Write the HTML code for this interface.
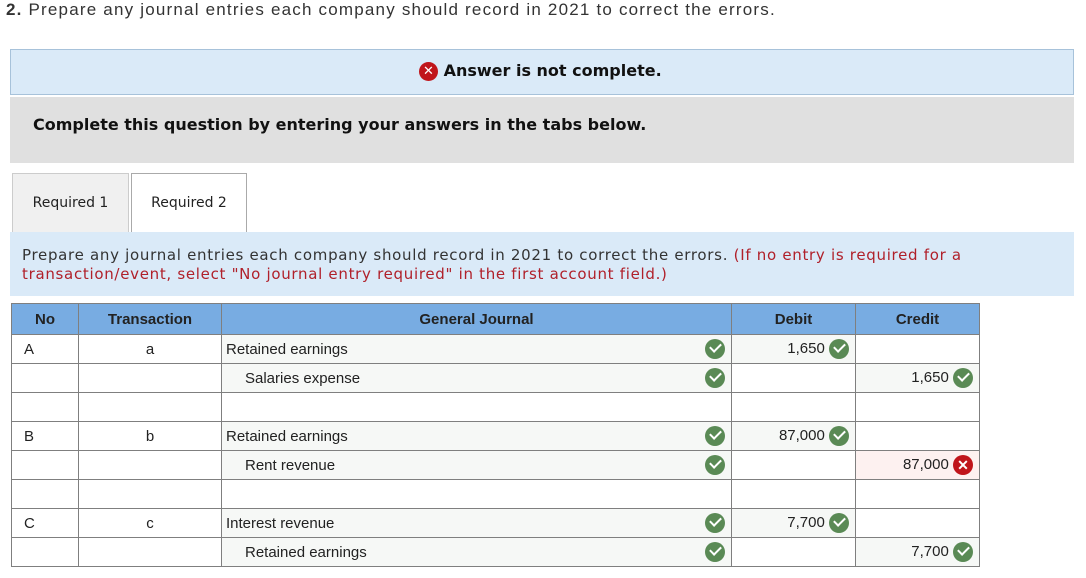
<!DOCTYPE html>
<html><head><style>
body{margin:0;width:1086px;height:578px;background:#fff;position:relative;overflow:hidden;font-family:"Liberation Sans",Arial,sans-serif;}
.a{position:absolute;}
.v{font-family:"DejaVu Sans",Verdana,sans-serif;}
table{position:absolute;left:11px;top:303px;border-collapse:collapse;font-size:15px;color:#222;}
td,th{border:1px solid #7f7f7f;height:28px;padding:0;vertical-align:middle;}
th{background:#78ace2;font-size:15px;height:30px;}
.f{background:#f6f8f6;}
.chk{display:inline-block;width:20px;height:20px;border-radius:50%;background:#5a8a55;vertical-align:middle;position:relative;}
.chk:after{content:"";position:absolute;left:5px;top:4px;width:9px;height:5px;border-left:2.5px solid #fff;border-bottom:2.5px solid #fff;transform:rotate(-45deg);}
.x{display:inline-block;width:20px;height:20px;border-radius:50%;background:#c0151b;color:#fff;font-weight:bold;font-size:14px;line-height:20px;text-align:center;vertical-align:middle;}
.r{text-align:right;padding-right:6px;}
.g{display:flex;align-items:center;justify-content:space-between;padding-right:6px;}
</style></head><body>
<div class="a" style="left:6px;top:0;font-size:17px;letter-spacing:1.2px;color:#333;">
<b>2.</b> Prepare any journal entries each company should record in 2021 to correct the errors.</div>
<div class="a" style="left:10px;top:49px;width:1062px;height:44px;background:#daeaf8;border:1px solid #a7c2da;"></div>
<div class="a v" style="left:419px;top:61px;font-size:16px;font-weight:bold;color:#111;"><span class="x" style="width:19px;height:19px;line-height:19px;font-size:13px;">✕</span> Answer is not complete.</div>
<div class="a" style="left:10px;top:97px;width:1064px;height:66px;background:#e0e0e0;"></div>
<div class="a v" style="left:33px;top:115px;font-size:16px;font-weight:bold;color:#111;">Complete this question by entering your answers in the tabs below.</div>
<div class="a v" style="left:12px;top:173px;width:115px;height:59px;background:#f0f0f0;border:1px solid #ccc;border-bottom:none;font-size:14px;line-height:59px;text-align:center;color:#222;">Required 1</div>
<div class="a v" style="left:131px;top:173px;width:114px;height:60px;background:#fff;border:1px solid #aaa;border-bottom:none;font-size:14px;line-height:59px;text-align:center;color:#222;">Required 2</div>
<div class="a" style="left:10px;top:232px;width:1064px;height:64px;background:#daeaf8;"></div>
<div class="a v" style="left:22px;top:246px;font-size:15px;line-height:19px;letter-spacing:0.7px;color:#333;width:975px;">Prepare any journal entries each company should record in 2021 to correct the errors. <span style="color:#b0202a">(If no entry is required for a transaction/event, select "No journal entry required" in the first account field.)</span></div>
<table>
<tr><th style="width:66px">No</th><th style="width:142px">Transaction</th><th style="width:509px">General Journal</th><th style="width:123px">Debit</th><th style="width:123px">Credit</th></tr>
<tr><td style="padding-left:12px">A</td><td style="text-align:center">a</td><td class="f"><div class="g" style="padding-left:4px">Retained earnings<span class="chk"></span></div></td><td class="f r">1,650 <span class="chk"></span></td><td></td></tr>
<tr><td></td><td></td><td class="f"><div class="g" style="padding-left:23px">Salaries expense<span class="chk"></span></div></td><td></td><td class="f r">1,650 <span class="chk"></span></td></tr>
<tr><td></td><td></td><td></td><td></td><td></td></tr>
<tr><td style="padding-left:12px">B</td><td style="text-align:center">b</td><td class="f"><div class="g" style="padding-left:4px">Retained earnings<span class="chk"></span></div></td><td class="f r">87,000 <span class="chk"></span></td><td></td></tr>
<tr><td></td><td></td><td class="f"><div class="g" style="padding-left:23px">Rent revenue<span class="chk"></span></div></td><td></td><td class="r" style="background:#fdf1f0">87,000 <span class="x">✕</span></td></tr>
<tr><td></td><td></td><td></td><td></td><td></td></tr>
<tr><td style="padding-left:12px">C</td><td style="text-align:center">c</td><td class="f"><div class="g" style="padding-left:4px">Interest revenue<span class="chk"></span></div></td><td class="f r">7,700 <span class="chk"></span></td><td></td></tr>
<tr><td></td><td></td><td class="f"><div class="g" style="padding-left:23px">Retained earnings<span class="chk"></span></div></td><td></td><td class="f r">7,700 <span class="chk"></span></td></tr>
</table>
</body></html>
